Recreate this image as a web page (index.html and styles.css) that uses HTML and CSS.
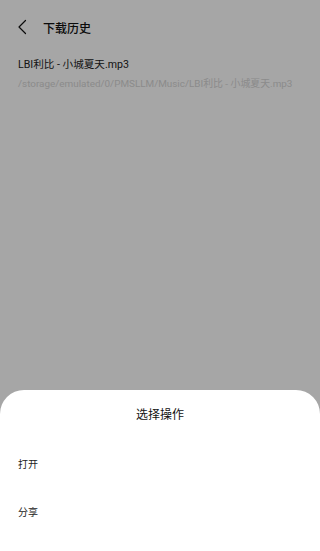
FILE: index.html
```html
<!DOCTYPE html>
<html>
<head>
<meta charset="utf-8">
<link rel="stylesheet" href="styles.css">
</head>
<body>
<div class="page">
  <header class="topbar">
    <svg class="back" width="12" height="16" viewBox="0 0 12 16"><path d="M9.5 1.5 L3 8 L9.5 14.5" fill="none" stroke="#111" stroke-width="1.2" stroke-linecap="round" stroke-linejoin="round"/></svg>
    <span class="title">下载历史</span>
  </header>
  <div class="item">
    <div class="name">LBI利比 - 小城夏天.mp3</div>
    <div class="path">/storage/emulated/0/PMSLLM/Music/LBI利比 - 小城夏天.mp3</div>
  </div>
</div>
<div class="overlay"></div>
<div class="sheet">
  <div class="sheet-title">选择操作</div>
  <div class="actions">
    <div class="action">打开</div>
    <div class="action">分享</div>
  </div>
</div>
</body>
</html>
```
FILE: styles.css
```css
* { box-sizing: border-box; }
html, body { margin: 0; padding: 0; }
body {
  width: 320px;
  height: 551px;
  overflow: hidden;
  background: #fff;
  font-family: Roboto, "Noto Sans CJK SC", sans-serif;
  color: #111;
}
.page { height: 551px; }
.topbar {
  height: 54px;
  display: flex;
  align-items: center;
  padding-left: 16px;
}
.back { margin-right: 15px; }
.title { font-size: 12px; font-weight: 500; }
.item { padding: 2px 18px 0; }
.name { font-size: 10.6px; line-height: 18px; color: #222; }
.path { font-size: 9.9px; line-height: 18px; color: #d6d6d6; margin-top: 1px; white-space: nowrap; }
.overlay {
  position: fixed;
  inset: 0;
  background: rgba(0,0,0,0.35);
}
.sheet {
  position: fixed;
  left: 0; right: 0; bottom: 0;
  height: 161px;
  background: #fff;
  border-radius: 24px 24px 0 0;
  display: flex;
  flex-direction: column;
}
.sheet-title {
  text-align: center;
  font-size: 12px;
  line-height: 18px;
  margin-top: 16px;
  color: #111;
}
.actions {
  display: flex;
  flex-direction: column;
  gap: 32px;
  margin-top: 33px;
}
.action {
  font-size: 10px;
  line-height: 16px;
  padding-left: 18px;
  color: #222;
}
```
